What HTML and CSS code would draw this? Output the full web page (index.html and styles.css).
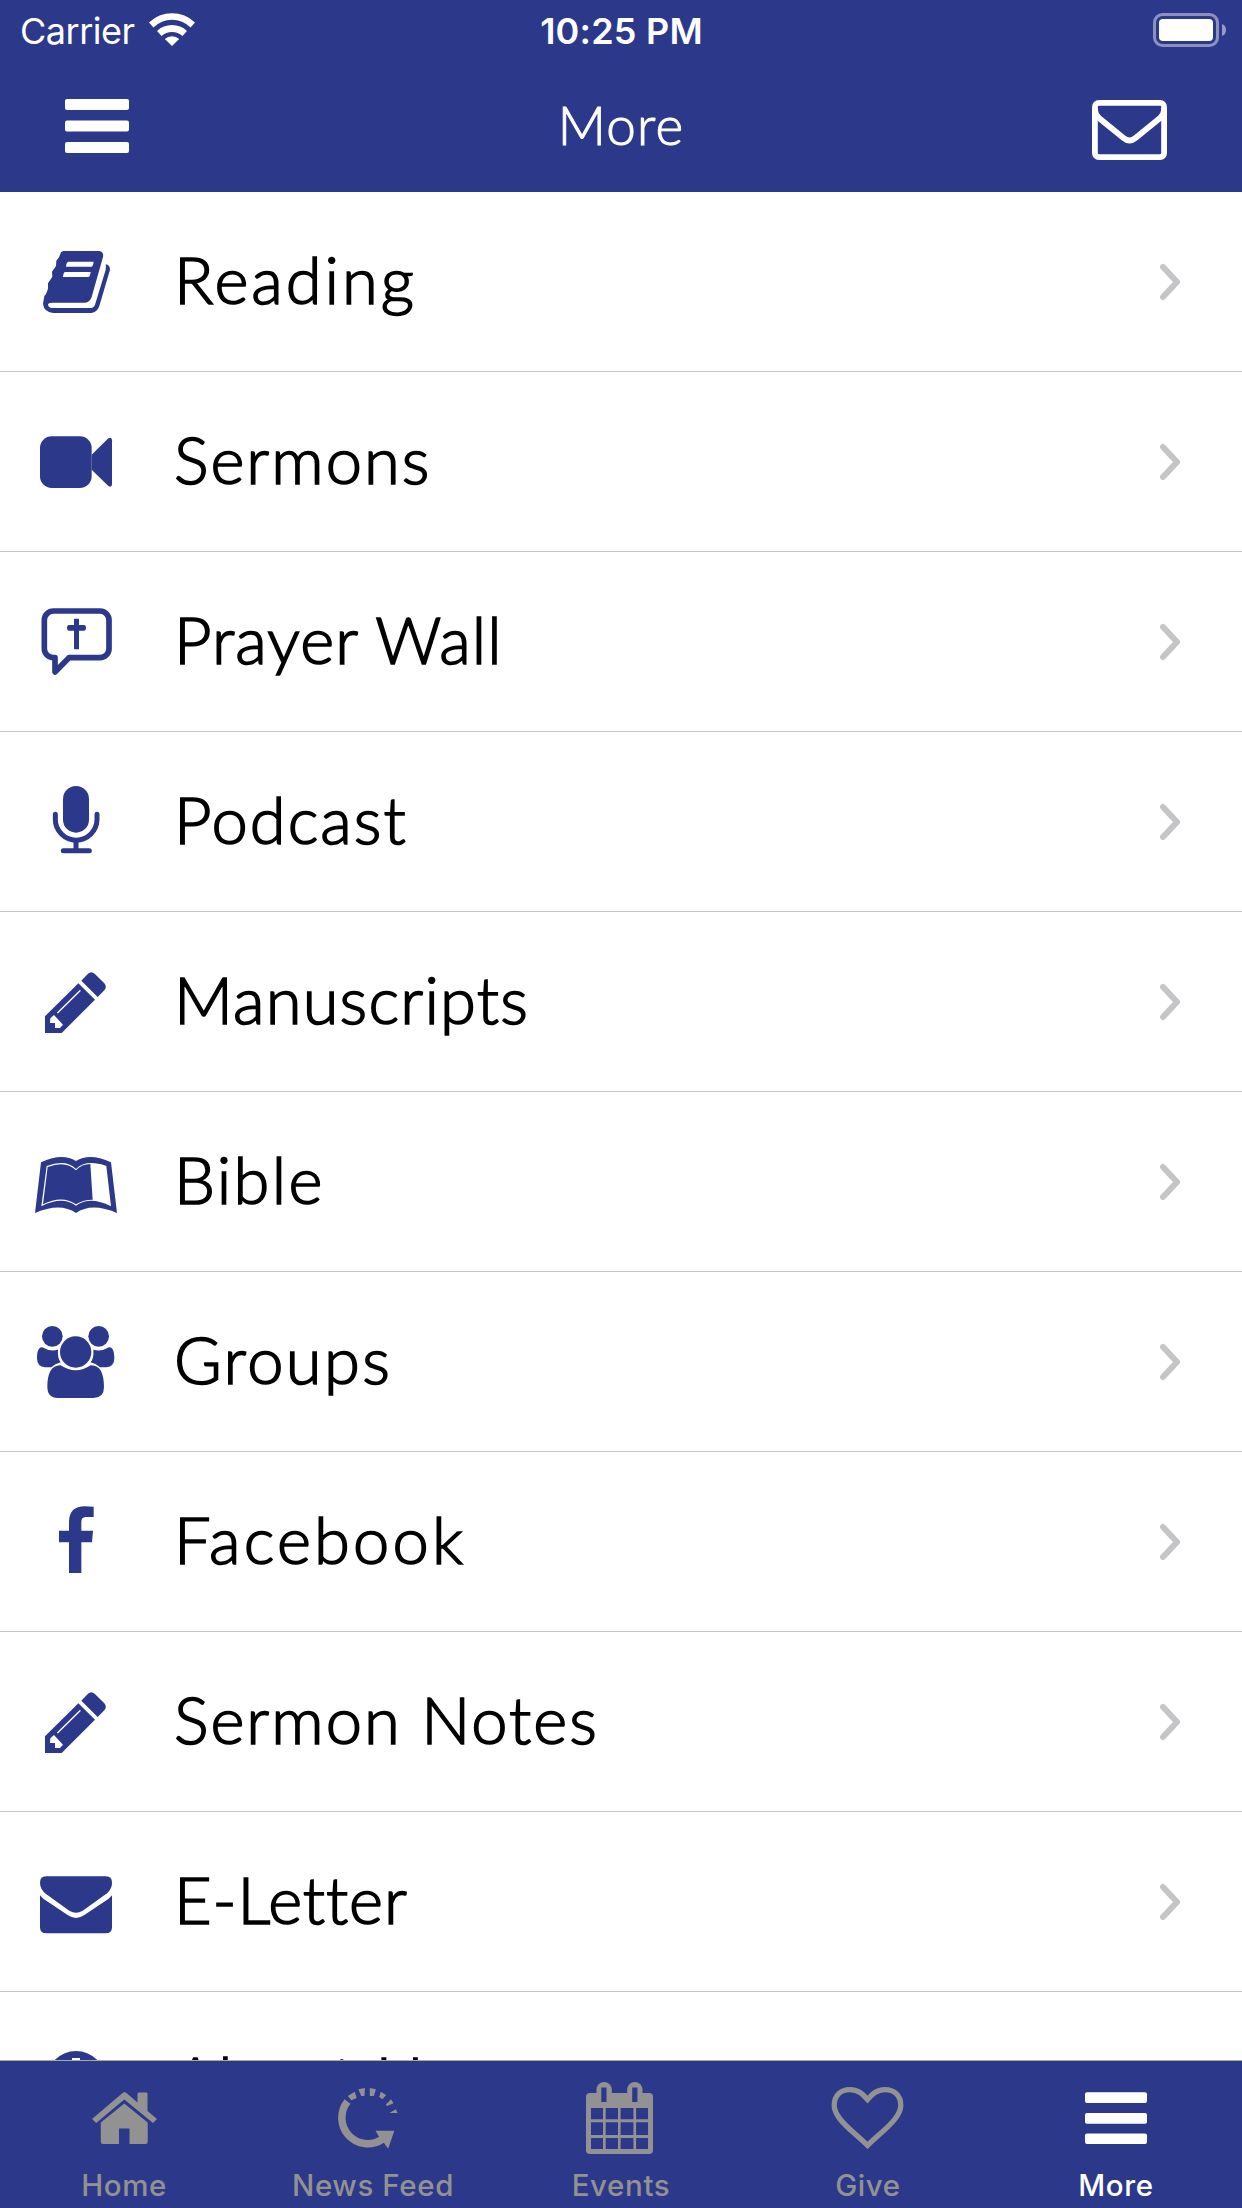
FILE: index.html
```html
<!DOCTYPE html>
<html lang="en">
<head>
<meta charset="utf-8">
<title>More</title>
<link rel="stylesheet" href="styles.css">
</head>
<body>
<div class="screen">
  <header class="header">
    <div class="status">
      <div class="status-left">
        <span class="carrier">Carrier</span>
        <svg class="wifi" viewBox="0 0 46 33"><path d="M0 9.500A33 33 0 0 1 46 9.500L41.500 14.500A26 26 0 0 0 4.500 14.500ZM8 18A22 22 0 0 1 38 18L33.500 23A15.500 15.500 0 0 0 12.500 23ZM15.800 26A10.500 10.500 0 0 1 30.200 26L23 33Z"/></svg>
      </div>
      <span class="time">10:25 PM</span>
      <svg class="battery" viewBox="0 0 74 34"><rect class="dim-line" x="1.500" y="1.500" width="63" height="31" rx="8"/><rect x="6" y="6" width="54" height="22" rx="4"/><path class="dim" d="M69 11Q73 12.500 73 17T69 23Z"/></svg>
    </div>
    <nav class="navbar">
      <svg class="menu" viewBox="0 0 64 54"><rect width="64" height="11" rx="2"/><rect y="21.500" width="64" height="11" rx="2"/><rect y="43" width="64" height="11" rx="2"/></svg>
      <h1 class="title">More</h1>
      <svg class="mail" viewBox="0 0 75 60"><rect x="2.900" y="2.900" width="69.200" height="54.200" rx="4"/><path d="M3 8V10Q3 14 7 18L31.500 38Q37.500 43 43.500 38L68 18Q72 14 72 10V8"/></svg>
    </nav>
  </header>

  <main class="list">
    <a class="row"><svg class="icon" viewBox="108 126 240 240"><path d="M190 153H298Q312 156 309 171L275 291Q270 307 255 308H157Q144 308 144 314Q146 324 159 324H270Q281 324 285 314L315 216Q319 205 317 193Q330 195 330 209L298 318Q291 337 274 339H159Q132 336 129 312L133 288L138 282L144 266V250L157 230L156 215L168 198L169 182L177 172L183 157Z"/><path class="cut" d="M205 185H281Q279 200 274 200H198Q199 187 205 185ZM195 216H272Q270 231 265 231H189Q190 218 195 216Z"/></svg><span class="label reading">Reading</span><svg class="chevron" viewBox="0 0 24 38"><path d="M5 4L19 19L5 34"/></svg></a>
    <a class="row"><svg class="icon" viewBox="108 666 240 240"><rect x="120" y="709" width="155" height="155" rx="35"/><path d="M275 764L325 715Q336 710 336 721V852Q336 864 325 858L275 809Z"/></svg><span class="label sermons">Sermons</span><svg class="chevron" viewBox="0 0 24 38"><path d="M5 4L19 19L5 34"/></svg></a>
    <a class="row"><svg class="icon" viewBox="108 126 240 240"><path class="line" d="M160 153H300A27 27 0 0 1 327 180V266A27 27 0 0 1 300 293H207L165 336V293H160A27 27 0 0 1 133 266V180A27 27 0 0 1 160 153Z"/><path d="M222 176H237V195H253Q258 195 258 203.500T253 212H237V268H222V212H206Q201 212 201 203.500T206 195H222Z"/></svg><span class="label prayer">Prayer Wall</span><svg class="chevron" viewBox="0 0 24 38"><path d="M5 4L19 19L5 34"/></svg></a>
    <a class="row"><svg class="icon" viewBox="108 666 240 240"><rect x="189" y="678" width="78" height="140" rx="39"/><path class="line thin" d="M166 763V778A62.500 62.500 0 0 0 291 778V763M228 842V872M190 872H268"/></svg><span class="label podcast">Podcast</span><svg class="chevron" viewBox="0 0 24 38"><path d="M5 4L19 19L5 34"/></svg></a>
    <a class="row"><svg class="icon" viewBox="108 126 240 240"><path d="M235 190L285 239L185 339H135V289ZM244 182L264 161Q274 152 284 161L313 190Q322 200 313 211L293 231Z"/><path class="groove" d="M173 278L240 212"/><path class="cut" d="M162 285L189 314L180 324H165V309H150L151 295Z"/></svg><span class="label manuscripts">Manuscripts</span><svg class="chevron" viewBox="0 0 24 38"><path d="M5 4L19 19L5 34"/></svg></a>
    <a class="row"><svg class="icon" viewBox="108 666 240 240"><path d="M123 727Q187 697 228 723Q269 697 333 727L351 879Q275 846 228 879Q181 846 105 879Z"/><path class="cut" d="M140 738Q198 717 228 747Q258 717 319 738L333 859Q270 827 228 857Q186 827 124 859Z"/><path d="M143 741Q198 721 228 751Q245 732 271 732L278 839Q247 839 228 853Q186 824 129 853Z"/></svg><span class="label bible">Bible</span><svg class="chevron" viewBox="0 0 24 38"><path d="M5 4L19 19L5 34"/></svg></a>
    <a class="row"><svg class="icon" viewBox="108 156 240 240"><circle cx="157" cy="199" r="31"/><circle cx="296" cy="199" r="31"/><circle cx="227" cy="246" r="47"/><path d="M142 350C142 310 155 285 182 286Q227 316 272 286C300 285 312 310 312 352Q312 383 281 384H173Q142 383 142 350Z"/><path d="M111 265C111 240 118 231 127 232Q150 246 174 239Q172 265 182 277Q165 281 154 292H135Q111 290 111 265ZM343 265C343 240 336 231 327 232Q304 246 280 239Q282 265 272 277Q289 281 300 292H319Q343 290 343 265Z"/></svg><span class="label groups">Groups</span><svg class="chevron" viewBox="0 0 24 38"><path d="M5 4L19 19L5 34"/></svg></a>
    <a class="row"><svg class="icon" viewBox="108 696 240 240"><path d="M281 710V741H257Q244 742 244 755V782H279L276 817H244V909H207V817H177V782H207V755Q208 709 254 709Z"/></svg><span class="label facebook">Facebook</span><svg class="chevron" viewBox="0 0 24 38"><path d="M5 4L19 19L5 34"/></svg></a>
    <a class="row"><svg class="icon" viewBox="108 126 240 240"><path d="M235 190L285 239L185 339H135V289ZM244 182L264 161Q274 152 284 161L313 190Q322 200 313 211L293 231Z"/><path class="groove" d="M173 278L240 212"/><path class="cut" d="M162 285L189 314L180 324H165V309H150L151 295Z"/></svg><span class="label notes">Sermon Notes</span><svg class="chevron" viewBox="0 0 24 38"><path d="M5 4L19 19L5 34"/></svg></a>
    <a class="row"><svg class="icon" viewBox="108 666 240 240"><path d="M138 709H318Q336 709 336 728C336 744 327 755 318 762L248 812Q228 824 208 812L138 762Q120 747 120 728Q120 709 138 709Z"/><path d="M120 766Q122 769 130 776L204 826Q228 842 252 826L326 776Q334 769 336 766V862Q336 880 318 880H138Q120 880 120 862Z"/></svg><span class="label eletter">E-Letter</span><svg class="chevron" viewBox="0 0 24 38"><path d="M5 4L19 19L5 34"/></svg></a>
    <a class="row"><svg class="icon" viewBox="108 246 240 240"><circle cx="228" cy="361" r="88"/><path class="cut" d="M216 294H240V318H216ZM204 338H242V398H254V414H204V398H216V354H204Z"/></svg><span class="label about">About Us</span><svg class="chevron" viewBox="0 0 24 38"><path d="M5 4L19 19L5 34"/></svg></a>
  </main>

  <footer class="tabs">
    <a class="tab"><svg class="tab-icon" viewBox="0 0 80 80"><path d="M8 41L38 15.500Q40.300 13 43 15.500L53.500 24.500V15.500L54.500 14.500H62.500L63.500 15.500V33L73 41L69 45L40.300 21.500L12.200 45ZM40.300 25.500L63.700 44.500V64Q63.700 66 61.700 66H45.500V50.500H35V66H18.800Q16.800 66 16.800 64V44.500Z"/></svg><span class="tab-label home">Home</span></a>
    <a class="tab"><svg class="tab-icon" viewBox="0 0 80 80"><path class="arc" d="M14.500 23.500A26 26 0 0 0 49 61.500"/><path d="M42.500 52.700H61.300L55.200 70.700L51 65L46.200 59ZM14.700 18L21.700 13.700L23.700 20L18.400 22.300ZM25.400 11.300L31.900 10L31.500 18H28.200ZM36.800 10L42.900 11.300L40.900 18H36.800ZM47.800 13.700L53.100 17L49.400 21.300L46.200 19ZM58 21.300L60.500 25.300L54.300 28L52.700 26.700ZM62.900 31.300L64.500 35H56.400Z"/></svg><span class="tab-label news">News Feed</span></a>
    <a class="tab"><svg class="tab-icon" viewBox="0 0 80 80"><rect x="5" y="15" width="67" height="61" rx="4"/><rect x="15.500" y="4" width="15.300" height="26" rx="7.600"/><rect x="46.200" y="4" width="15.300" height="26" rx="7.600"/><path class="hole" d="M20.300 9.500H25.500V24H20.300ZM51.200 9.500H56.400V24H51.200ZM10 30H22V41.300H10ZM24.700 30H37V41.300H24.700ZM39.600 30H52.400V41.300H39.600ZM55.100 30H67V41.300H55.100ZM10 44.300H22V57H10ZM24.700 44.300H37V57H24.700ZM39.600 44.300H52.400V57H39.600ZM55.100 44.300H67V57H55.100ZM10 60H22V71H10ZM24.700 60H37V71H24.700ZM39.600 60H52.400V71H39.600ZM55.100 60H67V71H55.100Z"/></svg><span class="tab-label events">Events</span></a>
    <a class="tab"><svg class="tab-icon" viewBox="0 0 80 80"><path class="heart" d="M39.500 67.500C30 58 19 50 12 41C7.500 35 6.200 31 6.200 27.500C6.200 17 13 11.700 22 11.700C31 11.700 35.500 17 39.500 21.500C43.500 17 48 11.700 57 11.700C66 11.700 72.800 17 72.800 27.500C72.800 31 71.500 35 67 41C60 50 49 58 39.500 67.500Z"/></svg><span class="tab-label give">Give</span></a>
    <a class="tab active"><svg class="tab-icon" viewBox="0 0 80 80"><rect x="9" y="14.300" width="62" height="10.700" rx="2"/><rect x="9" y="35" width="62" height="10.700" rx="2"/><rect x="9" y="55.400" width="62" height="10.700" rx="2"/></svg><span class="tab-label more">More</span></a>
  </footer>
</div>
</body>
</html>
```
FILE: styles.css
```css
* { box-sizing: border-box; }
body { margin: 0; background: #fff; }

.screen {
  width: 1242px;
  height: 2208px;
  display: flex;
  flex-direction: column;
  overflow: hidden;
  font-family: Lato, "Open Sans", sans-serif;
}

/* Status bar and title */
.header { flex: none; height: 192px; background: #2c398a; color: #fff; }
.header svg { fill: #fff; display: block; }
.status {
  height: 62px;
  padding: 0 15px 2px 20px;
  display: grid;
  grid-template-columns: 1fr auto 1fr;
  align-items: center;
  font-family: Inter, "Liberation Sans", sans-serif;
  font-size: 36px;
  line-height: 60px;
}
.status-left { display: flex; align-items: center; gap: 14px; }
.carrier { padding-top: 1px; letter-spacing: -0.5px; }
.wifi { width: 46px; height: 33px; margin-top: -2px; }
.time { padding: 1px 4px 0 0; font-weight: 600; letter-spacing: 0.2px; }
.battery { width: 74px; height: 34px; margin-top: -1px; justify-self: end; }
.battery .dim-line { fill: none; stroke: #fff; stroke-opacity: .45; stroke-width: 3; }
.battery .dim { fill-opacity: .5; }
.navbar {
  height: 130px;
  padding: 0 75px 0 65px;
  display: grid;
  grid-template-columns: 1fr auto 1fr;
  align-items: center;
}
.menu { width: 64px; height: 54px; margin-top: -2px; }
.title {
  margin: 0;
  padding: 0 0 5px 10px;
  font-size: 53px;
  font-weight: 300;
  line-height: 64px;
  letter-spacing: 1.2px;
  -webkit-text-stroke: 1px currentColor;
}
.header .mail { width: 75px; height: 60px; margin-top: 6px; justify-self: end; fill: none; stroke: #fff; stroke-width: 5.800; }

/* Menu list */
.list { flex: 1; min-height: 0; overflow: hidden; color: #000; }
.row {
  height: 180px;
  padding: 0 60px 0 36px;
  display: flex;
  align-items: center;
  border-bottom: 1px solid #c4c4c6;
}
.icon { width: 80px; height: 80px; flex: none; fill: #2c398a; overflow: visible; }
.cut { fill: #fff; }
.line { fill: none; stroke: #2c398a; stroke-width: 17; stroke-linejoin: round; stroke-linecap: round; }
.thin { stroke-width: 15; }
.groove { fill: none; stroke: #fff; stroke-width: 4; stroke-linecap: round; }
.label {
  flex: 1;
  padding: 0 0 6px 58px;
  font-size: 65px;
  font-weight: 300;
  line-height: 80px;
  letter-spacing: 2px;
  white-space: nowrap;
  -webkit-text-stroke: 1.6px currentColor;
}
.reading { letter-spacing: 3px; }
.prayer { letter-spacing: 1.1px; }
.manuscripts { letter-spacing: 1.2px; }
.bible, .groups { letter-spacing: 2.4px; }
.facebook { letter-spacing: 3.2px; }
.eletter { letter-spacing: 0.9px; }
.chevron { width: 24px; height: 38px; flex: none; }
.chevron path { fill: none; stroke: #c5c5c7; stroke-width: 6; stroke-linecap: round; stroke-linejoin: round; }

/* Tab bar */
.tabs {
  flex: none;
  height: 148px;
  display: grid;
  grid-template-columns: 248px 250px 246px 248px 248px;
  background: #2c398a;
  border-top: 1px solid #a9a9ab;
}
.tab { display: flex; flex-direction: column; align-items: center; padding-top: 17px; color: #929292; }
.tab-icon { width: 80px; height: 80px; fill: currentColor; }
.arc { fill: none; stroke: currentColor; stroke-width: 7.500; }
.heart { fill: none; stroke: currentColor; stroke-width: 5.300; }
.hole { fill: #2c398a; }
.tab-label {
  margin-top: 9px;
  font-family: Inter, "Liberation Sans", sans-serif;
  font-size: 29.500px;
  font-weight: 500;
  line-height: 36px;
  letter-spacing: 0.6px;
}
.active { color: #fff; }
```
